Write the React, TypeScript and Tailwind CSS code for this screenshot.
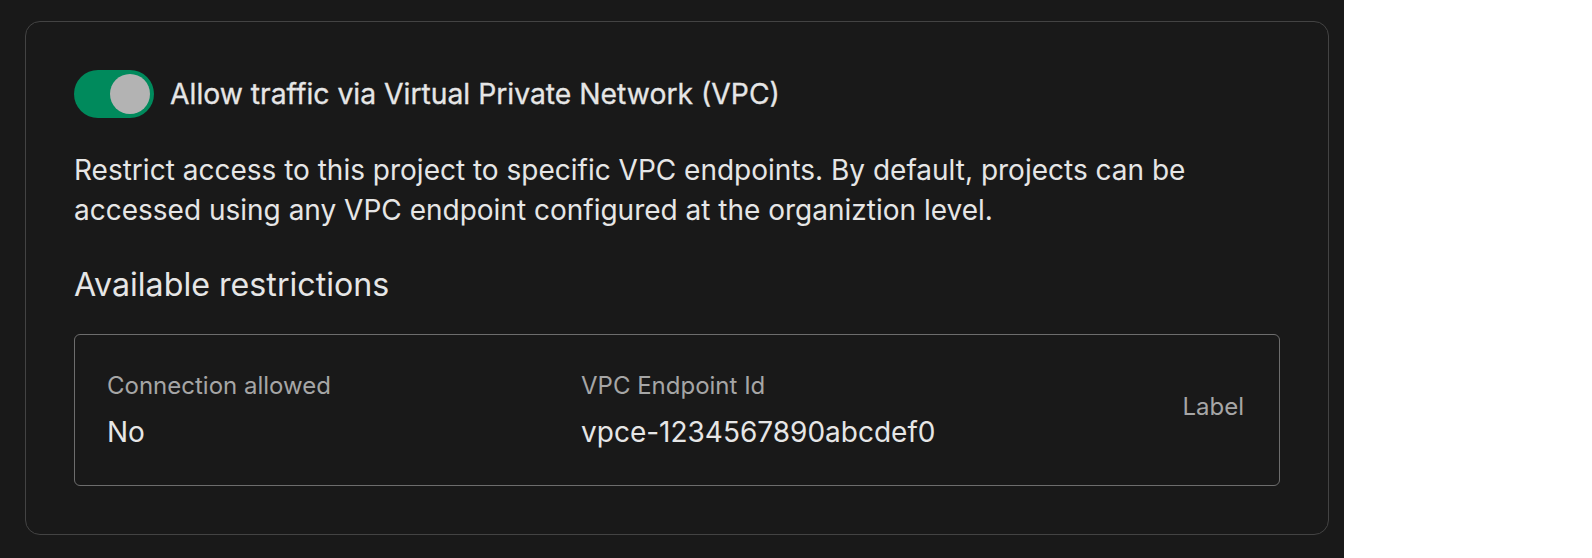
export default function App() {
  return (
    <div className="flex min-h-[558px] bg-white font-['Inter',sans-serif]">
      <div className="w-[1344px] h-[558px] bg-[#191919] pl-[25px] pt-[21px]">
        <div className="w-[1304px] rounded-[15px] border border-[#434343] p-12">
          {/* toggle row */}
          <div className="flex items-center gap-4">
            <button className="flex h-12 w-20 items-center justify-end rounded-full bg-[#008a5c] p-1">
              <span className="h-10 w-10 rounded-full bg-[#b3b3b3]" />
            </button>
            <span className="text-[28.3px] leading-10 text-[#e6e6e6] [-webkit-text-stroke:0.3px_#e6e6e6]">
              Allow traffic via Virtual Private Network (VPC)
            </span>
          </div>

          <p className="mt-8 text-[28px] leading-10 text-[#e6e6e6]">
            Restrict access to this project to specific VPC endpoints. By default, projects can be
            <br />
            accessed using any VPC endpoint configured at the organiztion level.
          </p>

          <h2 className="mt-[35px] text-[32.2px] leading-10 text-[#e6e6e6]">Available restrictions</h2>

          <div className="mt-[29px] flex items-center rounded-md border border-[#6d6d6d] pl-8 pr-[35px] pt-[35px] pb-[33px]">
            <div className="w-[474px]">
              <div className="text-2xl leading-8 text-[#a6a6a6]">Connection allowed</div>
              <div className="mt-[10px] text-[28px] leading-10 text-[#e6e6e6]">No</div>
            </div>
            <div className="flex-1">
              <div className="text-2xl leading-8 text-[#a6a6a6]">VPC Endpoint Id</div>
              <div className="mt-[10px] text-[28px] leading-10 text-[#e6e6e6]">vpce-1234567890abcdef0</div>
            </div>
            <div className="mb-2 text-2xl leading-8 text-[#a6a6a6]">Label</div>
          </div>
        </div>
      </div>
    </div>
  );
}
